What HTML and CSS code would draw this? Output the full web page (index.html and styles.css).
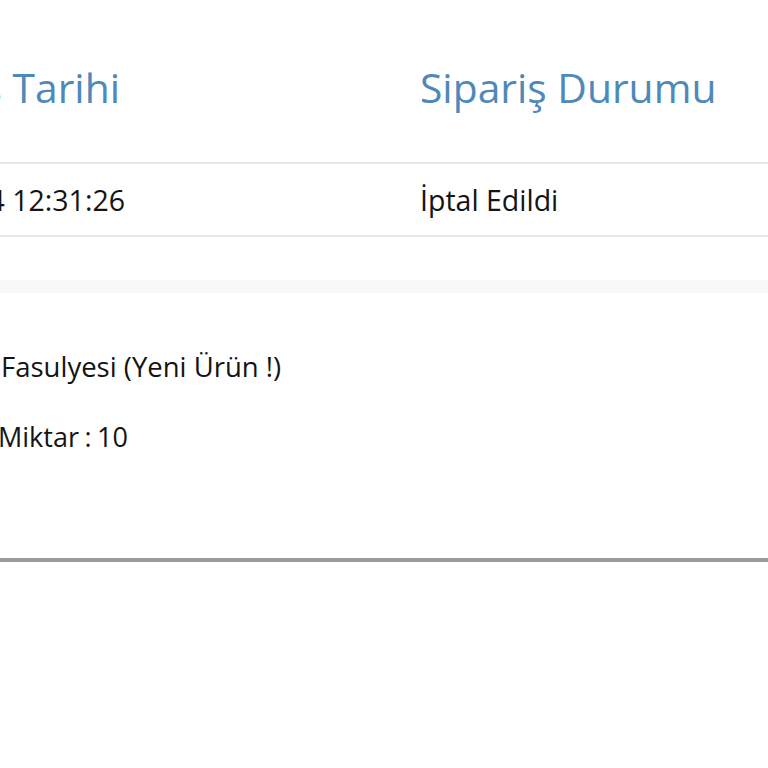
FILE: index.html
```html
<!DOCTYPE html>
<html lang="tr">
<head>
<meta charset="utf-8">
<link rel="stylesheet" href="styles.css">
</head>
<body>
<div class="page">
  <div class="orders">
    <div class="row head">
      <div class="cell c1"><span>Sipariş Tarihi</span></div>
      <div class="cell c2">Sipariş Durumu</div>
    </div>
    <div class="row data">
      <div class="cell c1"><span>12.03.2024 12:31:26</span></div>
      <div class="cell c2">İptal Edildi</div>
    </div>
    <div class="spacer"></div>
    <div class="band"></div>
    <div class="items">
      <div class="item-name">Fasulyesi (Yeni Ürün !)</div>
      <div class="item-qty">Miktar : 10</div>
    </div>
  </div>
</div>
</body>
</html>
```
FILE: styles.css
```css
html, body {
  margin: 0;
  padding: 0;
  background: #ffffff;
}
body {
  font-family: "Open Sans", "Noto Sans", sans-serif;
  color: #141414;
  width: 768px;
  height: 768px;
  overflow: hidden;
}
.page {
  width: 768px;
  overflow: hidden;
}
.orders {
  width: 768px;
}
.row {
  display: flex;
}
.cell {
  box-sizing: border-box;
  white-space: nowrap;
}
.c1 {
  flex: none;
  width: 418px;
  display: flex;
  justify-content: flex-end;
  overflow: hidden;
}
.c2 {
  flex: 1;
  padding-left: 2px;
}
.head {
  height: 164px;
  border-bottom: 2px solid #e6e6e6;
  box-sizing: border-box;
}
.head .cell {
  color: #4f89ba;
  font-size: 40.8px;
  line-height: 48px;
  padding-top: 63px;
}
.head .c1 {
  padding-right: 298px;
}
.data {
  height: 73px;
  border-bottom: 2px solid #e8e8e8;
  box-sizing: border-box;
}
.data .cell {
  font-size: 28.5px;
  line-height: 34px;
  padding-top: 19px;
}
.data .c1 {
  padding-right: 293px;
}
.spacer {
  height: 43px;
  background: #fefefe;
}
.band {
  height: 13px;
  background: #f8f8f8;
}
.items {
  height: 269px;
  border-bottom: 4px solid #9a9a9a;
  padding-top: 57px;
  box-sizing: border-box;
}
.item-name, .item-qty {
  font-size: 27.5px;
  line-height: 34px;
  color: #141414;
  white-space: nowrap;
}
.item-name {
  margin-left: 1px;
}
.item-qty {
  margin-top: 36px;
  margin-left: -2px;
  font-size: 27px;
  word-spacing: -1.5px;
}
```
